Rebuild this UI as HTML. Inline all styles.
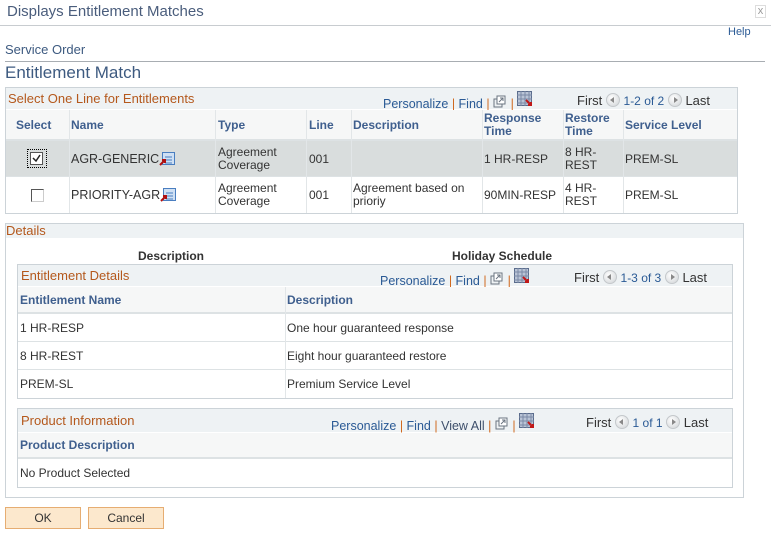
<!DOCTYPE html>
<html><head><meta charset="utf-8"><style>
*{margin:0;padding:0;box-sizing:border-box}
body{width:771px;height:534px;background:#fff;font-family:"Liberation Sans",sans-serif;font-size:12px;color:#333;position:relative;overflow:hidden}
.a{position:absolute;white-space:nowrap}
.box{position:absolute;border:1px solid #ccd3d8}
.hb{position:absolute;background:#eef2f4}
.ttl{color:#b4581c;font-size:13px}
.lk{color:#2a5a95}
.sep{color:#d06a20}
.ch{color:#3f5f8e;font-weight:bold;font-size:12px}
.hl{position:absolute;height:1px;background:#dde2e4}
.btn{position:absolute;background:#fce8cd;border:1px solid #e6ad72;text-align:center;font-size:12px;color:#333;line-height:20px}
.cir{display:inline-block;width:14px;height:14px;border-radius:7px;background:radial-gradient(circle at 40% 35%,#fff,#cfd3d6);border:1px solid #c4c8cb;vertical-align:-2px;position:relative}
.cir.l::after{content:"";position:absolute;left:3px;top:3px;border:3px solid transparent;border-right:4px solid #888;border-left:0}
.cir.r::after{content:"";position:absolute;left:5px;top:3px;border:3px solid transparent;border-left:4px solid #888;border-right:0}
.tb{font-size:12.5px}
</style></head><body>
<div class="a" style="left:7px;top:3px;font-size:15px;color:#4a5d7c">Displays Entitlement Matches</div>
<div class="a" style="left:755px;top:5px;font-size:11px;color:#999;border:1px solid #ddd;width:11px;height:13px;text-align:center;line-height:11px">x</div>
<div class="a" style="left:0;top:25px;width:771px;height:1px;background:#c8ccd0"></div>
<div class="a" style="left:728px;top:26px;font-size:11px;color:#2a5a95">Help</div>
<div class="a" style="left:5px;top:42px;font-size:13px;color:#3d5a80">Service Order</div>
<div class="a" style="left:5px;top:61px;width:760px;height:1px;background:#a8adb2"></div>
<div class="a" style="left:5px;top:63px;font-size:17px;color:#3d5a80">Entitlement Match</div>

<!-- grid 1 -->
<div class="box" style="left:5px;top:87px;width:733px;height:127px"></div>
<div class="hb" style="left:6px;top:88px;width:731px;height:21px"></div>
<div class="a ttl" style="left:8px;top:91px">Select One Line for Entitlements</div>
<div class="a tb" style="left:383px;top:91px"><span class="lk">Personalize</span> <span class="sep">|</span> <span class="lk">Find</span> <span class="sep">|</span> <svg width="14" height="13" style="vertical-align:0"><rect x="1" y="4" width="8" height="8" fill="none" stroke="#6a7480"/><rect x="4" y="1" width="8" height="8" fill="#fff" stroke="#6a7480"/><path d="M6 7l4-4M7 3h3v3" stroke="#6a7480" fill="none"/></svg> <span class="sep">|</span> <svg width="16" height="16" style="vertical-align:1px"><rect x="0.5" y="0.5" width="14" height="14" fill="#b9c4d6" stroke="#5a6c8c"/><path d="M0 4h15M0 8h15M0 12h15M4 0v15M8 0v15M12 0v15" stroke="#7a8aa6"/><path d="M9 9l5 5M11 14h3v-3" stroke="#c01818" stroke-width="2" fill="none"/></svg></div>
<div class="a" style="left:577px;top:93px;font-size:13px">First <span class="cir l"></span> <span class="lk" style="font-size:12px">1-2 of 2</span> <span class="cir r"></span> Last</div>
<div class="hb" style="left:6px;top:110px;width:731px;height:29px;background:#f6f7f7"></div>
<div class="hl" style="left:6px;top:139px;width:731px;height:2px"></div>
<div class="a" style="left:6px;top:141px;width:731px;height:35px;background:#d9dddd"></div>
<div class="hl" style="left:6px;top:176px;width:731px"></div>
<div class="a ch" style="left:16px;top:118px">Select</div>
<div class="a ch" style="left:71px;top:118px">Name</div>
<div class="a ch" style="left:218px;top:118px">Type</div>
<div class="a ch" style="left:309px;top:118px">Line</div>
<div class="a ch" style="left:353px;top:118px">Description</div>
<div class="a ch" style="left:484px;top:112px;line-height:13px">Response<br>Time</div>
<div class="a ch" style="left:565px;top:112px;line-height:13px">Restore<br>Time</div>
<div class="a ch" style="left:625px;top:118px">Service Level</div>
<div class="a" style="left:69px;top:110px;width:1px;height:103px;background:#e2e6e8"></div>
<div class="a" style="left:215px;top:110px;width:1px;height:103px;background:#e2e6e8"></div>
<div class="a" style="left:306px;top:110px;width:1px;height:103px;background:#e2e6e8"></div>
<div class="a" style="left:351px;top:110px;width:1px;height:103px;background:#e2e6e8"></div>
<div class="a" style="left:482px;top:110px;width:1px;height:103px;background:#e2e6e8"></div>
<div class="a" style="left:563px;top:110px;width:1px;height:103px;background:#e2e6e8"></div>
<div class="a" style="left:623px;top:110px;width:1px;height:103px;background:#e2e6e8"></div>
<!-- row1 -->
<div class="a" style="left:27px;top:149px;width:20px;height:19px;border:1px dotted #000"></div>
<div class="a" style="left:30px;top:152px;width:13px;height:13px;border:1px solid #555;background:#fff"><svg width="11" height="11"><path d="M2 5l3 3 4-6" stroke="#222" stroke-width="1.5" fill="none"/></svg></div>
<div class="a" style="left:71px;top:152px;font-size:12.5px">AGR-GENERIC<svg width="16" height="14" style="vertical-align:-3px"><rect x="3.5" y="0.5" width="12" height="12" fill="#cfe0f4" stroke="#4a7ec0"/><path d="M6 5h7M6 8h7M6 11h7" stroke="#4a7ec0"/><path d="M1 13l5-5M3 8h3v3" stroke="#b01010" stroke-width="2" fill="none"/></svg></div>
<div class="a" style="left:218px;top:146px;line-height:13px">Agreement<br>Coverage</div>
<div class="a" style="left:309px;top:152px">001</div>
<div class="a" style="left:484px;top:152px">1 HR-RESP</div>
<div class="a" style="left:565px;top:146px;line-height:13px">8 HR-<br>REST</div>
<div class="a" style="left:625px;top:152px">PREM-SL</div>
<!-- row2 -->
<div class="a" style="left:31px;top:189px;width:13px;height:13px;border:1px solid #555;border-right-color:#ccc;border-bottom-color:#ccc;background:#fff"></div>
<div class="a" style="left:71px;top:188px;font-size:12.5px">PRIORITY-AGR<svg width="16" height="14" style="vertical-align:-3px"><rect x="3.5" y="0.5" width="12" height="12" fill="#cfe0f4" stroke="#4a7ec0"/><path d="M6 5h7M6 8h7M6 11h7" stroke="#4a7ec0"/><path d="M1 13l5-5M3 8h3v3" stroke="#b01010" stroke-width="2" fill="none"/></svg></div>
<div class="a" style="left:218px;top:182px;line-height:13px">Agreement<br>Coverage</div>
<div class="a" style="left:309px;top:188px">001</div>
<div class="a" style="left:353px;top:182px;line-height:13px">Agreement based on<br>prioriy</div>
<div class="a" style="left:484px;top:188px">90MIN-RESP</div>
<div class="a" style="left:565px;top:182px;line-height:13px">4 HR-<br>REST</div>
<div class="a" style="left:625px;top:188px">PREM-SL</div>

<!-- Details -->
<div class="box" style="left:5px;top:223px;width:739px;height:275px"></div>
<div class="hb" style="left:6px;top:224px;width:737px;height:14px"></div>
<div class="a ttl" style="left:6px;top:223px;font-size:13px">Details</div>
<div class="a" style="left:138px;top:249px;font-weight:bold;color:#333">Description</div>
<div class="a" style="left:452px;top:249px;font-weight:bold;color:#333">Holiday Schedule</div>

<div class="box" style="left:17px;top:264px;width:716px;height:135px"></div>
<div class="hb" style="left:18px;top:265px;width:714px;height:21px"></div>
<div class="a ttl" style="left:21px;top:268px">Entitlement Details</div>
<div class="a tb" style="left:380px;top:268px"><span class="lk">Personalize</span> <span class="sep">|</span> <span class="lk">Find</span> <span class="sep">|</span> <svg width="14" height="13" style="vertical-align:0"><rect x="1" y="4" width="8" height="8" fill="none" stroke="#6a7480"/><rect x="4" y="1" width="8" height="8" fill="#fff" stroke="#6a7480"/><path d="M6 7l4-4M7 3h3v3" stroke="#6a7480" fill="none"/></svg> <span class="sep">|</span> <svg width="16" height="16" style="vertical-align:1px"><rect x="0.5" y="0.5" width="14" height="14" fill="#b9c4d6" stroke="#5a6c8c"/><path d="M0 4h15M0 8h15M0 12h15M4 0v15M8 0v15M12 0v15" stroke="#7a8aa6"/><path d="M9 9l5 5M11 14h3v-3" stroke="#c01818" stroke-width="2" fill="none"/></svg></div>
<div class="a" style="left:574px;top:270px;font-size:13px">First <span class="cir l"></span> <span class="lk" style="font-size:12px">1-3 of 3</span> <span class="cir r"></span> Last</div>
<div class="hb" style="left:18px;top:287px;width:714px;height:25px;background:#f6f7f7"></div>
<div class="hl" style="left:18px;top:312px;width:714px;height:2px"></div>
<div class="hl" style="left:18px;top:341px;width:714px"></div>
<div class="hl" style="left:18px;top:369px;width:714px"></div>
<div class="a" style="left:285px;top:287px;width:1px;height:111px;background:#e2e6e8"></div>
<div class="a ch" style="left:20px;top:293px">Entitlement Name</div>
<div class="a ch" style="left:287px;top:293px">Description</div>
<div class="a" style="left:20px;top:321px">1 HR-RESP</div><div class="a" style="left:287px;top:321px">One hour guaranteed response</div>
<div class="a" style="left:20px;top:349px">8 HR-REST</div><div class="a" style="left:287px;top:349px">Eight hour guaranteed restore</div>
<div class="a" style="left:20px;top:377px">PREM-SL</div><div class="a" style="left:287px;top:377px">Premium Service Level</div>

<div class="box" style="left:17px;top:408px;width:716px;height:80px"></div>
<div class="hb" style="left:18px;top:409px;width:714px;height:23px"></div>
<div class="a ttl" style="left:21px;top:413px">Product Information</div>
<div class="a tb" style="left:331px;top:413px"><span class="lk">Personalize</span> <span class="sep">|</span> <span class="lk">Find</span> <span class="sep">|</span> <span style="color:#3d4f6b">View All</span> <span class="sep">|</span> <svg width="14" height="13" style="vertical-align:0"><rect x="1" y="4" width="8" height="8" fill="none" stroke="#6a7480"/><rect x="4" y="1" width="8" height="8" fill="#fff" stroke="#6a7480"/><path d="M6 7l4-4M7 3h3v3" stroke="#6a7480" fill="none"/></svg> <span class="sep">|</span> <svg width="16" height="16" style="vertical-align:1px"><rect x="0.5" y="0.5" width="14" height="14" fill="#b9c4d6" stroke="#5a6c8c"/><path d="M0 4h15M0 8h15M0 12h15M4 0v15M8 0v15M12 0v15" stroke="#7a8aa6"/><path d="M9 9l5 5M11 14h3v-3" stroke="#c01818" stroke-width="2" fill="none"/></svg></div>
<div class="a" style="left:586px;top:415px;font-size:13px">First <span class="cir l"></span> <span class="lk" style="font-size:12px">1 of 1</span> <span class="cir r"></span> Last</div>
<div class="hb" style="left:18px;top:433px;width:714px;height:24px;background:#f6f7f7"></div>
<div class="hl" style="left:18px;top:457px;width:714px;height:2px"></div>
<div class="a ch" style="left:20px;top:438px">Product Description</div>
<div class="a" style="left:20px;top:466px">No Product Selected</div>

<div class="btn" style="left:5px;top:507px;width:76px;height:22px">OK</div>
<div class="btn" style="left:88px;top:507px;width:76px;height:22px">Cancel</div>
</body></html>
